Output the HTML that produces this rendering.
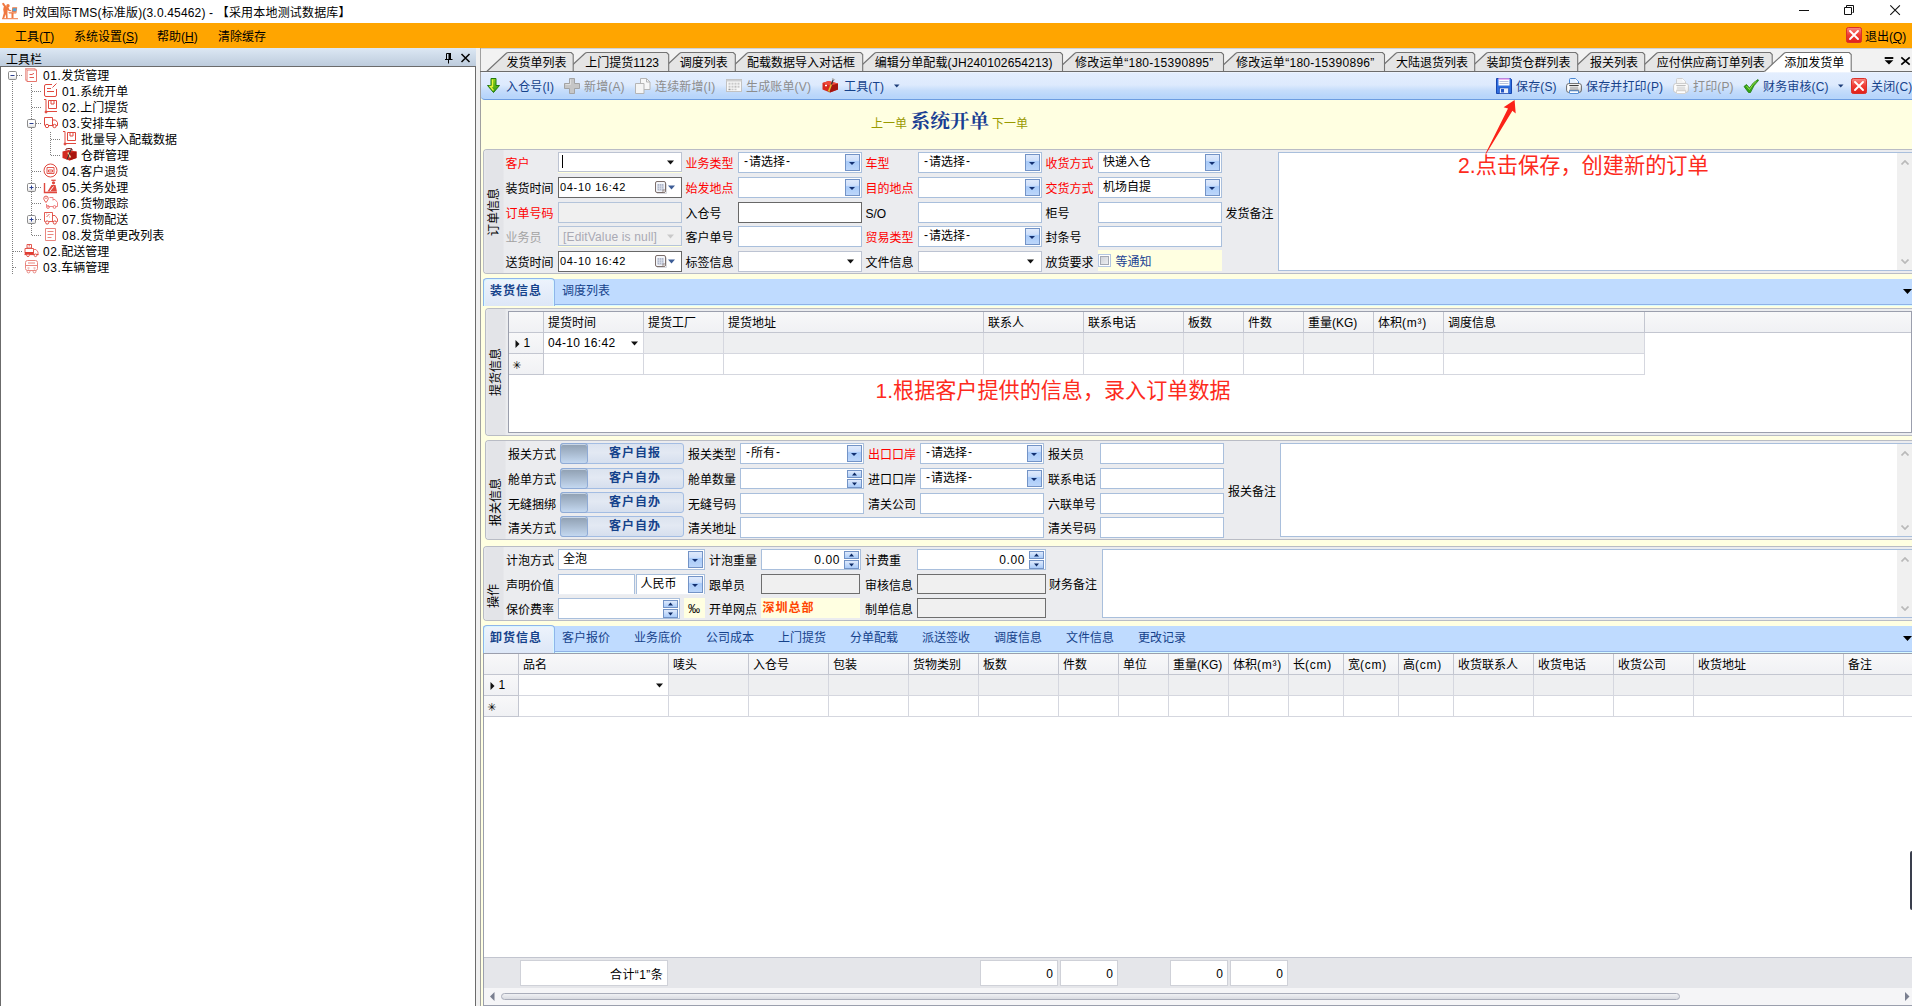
<!DOCTYPE html><html lang="zh-CN"><head><meta charset="utf-8"><title>TMS</title><style>
html,body{margin:0;padding:0}
body{width:1912px;height:1006px;position:relative;overflow:hidden;background:#fff;font:12px/16px "Liberation Sans","Noto Sans CJK SC",sans-serif;color:#000}
div,span,svg{position:absolute;box-sizing:border-box}
.t{white-space:nowrap;line-height:16px;height:16px;font-size:12px}
.r{color:#f00}
.b{font-weight:bold}
.inp{background:#fff;border:1px solid #a9bfdc}
.inpd{background:#fff;border:1px solid #686868}
.dis{background:#f0f0f0;border:1px solid #b4c4da}
.disd{background:#f0f0f0;border:1px solid #6e6e6e}
.ddb{border:1px solid #7393c6;background:linear-gradient(#dfeafc,#cfe0fb 36%,#a9cbf9 44%,#bcd6fa)}
.ddb:after{content:"";position:absolute;left:50%;top:50%;margin:-1px 0 0 -3.500px;border:3px solid transparent;border-top:3px solid #123072;border-bottom:0}
.grp{background:#ebecef;border:1px solid #b9bcc5;border-radius:4px}
.cap{background:linear-gradient(90deg,#e8e9ed,#e3e4e8 12%,#e3e4e8 92%,#e8e9ec);border-radius:3px 0 0 3px}
.vt{transform:rotate(-90deg);transform-origin:center center;white-space:nowrap;font-size:12px;line-height:16px;height:16px;text-align:center}
.hd{background:linear-gradient(#f8f8f9,#f0f1f4);border-right:1px solid #c3c6d0;border-bottom:1px solid #c3c6d0;white-space:nowrap;overflow:hidden;padding-left:4px;line-height:22px;font-size:12px}
.c{border-right:1px solid #d5d7df;border-bottom:1px solid #d5d7df;background:#fff}
.cs{border-right:1px solid #d5d7df;border-bottom:1px solid #d5d7df;background:#eeeff1}
.tb{color:#15428b}
.tg{color:#8d8d8d}
.l{font-style:normal;letter-spacing:.75px;position:static}
.h{font-style:normal;position:relative;top:-1px;padding:0 1px;left:0}
.n{font-style:normal;letter-spacing:.55px;position:static}
</style></head><body>
<div style="left:0px;top:0px;width:1912px;height:23px;background:#fff"></div>
<svg style="left:0;top:0" width="20" height="22" viewBox="0 0 20 22">
<g fill="#f07840"><circle cx="8" cy="5.800" r="1.700"/><path d="M2.200 3.300q1-.9 1.900 0l1 1.600 1.500 1.500 1.800.9 1 2.400 1.800.6v.9l-2.500-.2-1-1.200-.3 3.200.3 5.400H6.200l-.6-4.200-1.500 4.200H2.300l1.500-5.400-.6-3.400.7-3.300L2.600 5z"/>
<path d="M8.300 12.200h8.600l-.8 1.300h-2.600v4.600h-2V13.500H9.100z"/><path d="M2 18.200h16v1H2z"/><path d="M12.300 7.200h4.900l-.6 4.700h-4.900z"/></g>
<path d="M12.900 8.200h3.700l-.4 3h-3.700z" fill="#4ea6dc"/></svg>
<span class="t" style="left:23px;top:4.5px;letter-spacing:.17px">时效国际TMS(标准版)(3.0.45462) - 【采用本地测试数据库】</span>
<svg style="left:1790px;top:0" width="122" height="23" viewBox="0 0 122 23" fill="none" stroke="#111" stroke-width="1"><path d="M9 10.5h10"/><path d="M54.500 7.500h7v7h-7z"/><path d="M56.500 7.500v-2h7v7h-1"/><path d="M100.3 5.3l9.6 9.6M109.9 5.3l-9.6 9.6" stroke-width="1.1"/></svg>
<div style="left:0px;top:23px;width:1912px;height:25px;background:#ffa500"></div>
<span class="t" style="left:15px;top:29px;">工具(<u>T</u>)</span>
<span class="t" style="left:74px;top:29px;">系统设置(<u>S</u>)</span>
<span class="t" style="left:157px;top:29px;">帮助(<u>H</u>)</span>
<span class="t" style="left:218px;top:29px;">清除缓存</span>
<svg style="left:1846px;top:27px" width="16" height="16" viewBox="0 0 16 16"><defs><linearGradient id="rx1" x1="0" y1="0" x2="0" y2="1"><stop offset="0" stop-color="#f98a84"/><stop offset=".5" stop-color="#ef3b33"/><stop offset="1" stop-color="#e0201a"/></linearGradient></defs><rect x=".5" y=".5" width="15" height="15" rx="1.800" fill="url(#rx1)" stroke="#d9312a"/><path d="M4 4l8 8M12 4l-8 8" stroke="#fff" stroke-width="1.900" stroke-linecap="round"/></svg>
<span class="t" style="left:1865px;top:29px;">退出(<u>Q</u>)</span>
<div style="left:0px;top:48px;width:476px;height:19px;background:linear-gradient(#dde8f4,#cfdcea 40%,#bccbdc)"></div>
<span class="t" style="left:6px;top:52px;">工具栏</span>
<svg style="left:443px;top:51px" width="30" height="14" viewBox="0 0 30 14" fill="none" stroke="#000"><path d="M3.500 8V2.500h4V8" stroke-width="1"/><path d="M5.500 2h2.500v6.500h-2.500z" fill="#000" stroke="none"/><path d="M2 8.500h7.500M5.500 9v3.500" stroke-width="1"/><path d="M18.5 3l8 8M26.5 3l-8 8" stroke-width="1.5"/></svg>
<div style="left:0px;top:66px;width:476px;height:940px;background:#fff;border:1px solid #6b6b6b;border-bottom:0"></div>
<div style="left:476px;top:48px;width:4px;height:958px;background:#f0f0f0"></div>
<div style="left:12px;top:80px;width:1px;height:194px;background:repeating-linear-gradient(0deg,#7f7f7f 0 1px,transparent 1px 2px)"></div>
<div style="left:31px;top:83px;width:1px;height:152px;background:repeating-linear-gradient(0deg,#7f7f7f 0 1px,transparent 1px 2px)"></div>
<div style="left:50px;top:132px;width:1px;height:23px;background:repeating-linear-gradient(0deg,#7f7f7f 0 1px,transparent 1px 2px)"></div>
<div style="left:17px;top:75px;width:6px;height:1px;background:repeating-linear-gradient(90deg,#7f7f7f 0 1px,transparent 1px 2px)"></div>
<svg style="left:8px;top:71px" width="9" height="9" viewBox="0 0 9 9"><defs><linearGradient id="eg8_75" x1="0" y1="0" x2="0" y2="1"><stop offset=".5" stop-color="#fff"/><stop offset="1" stop-color="#dcdcdc"/></linearGradient></defs><rect x=".5" y=".5" width="8" height="8" rx="1.200" fill="url(#eg8_75)" stroke="#8c8c8c"/><path d="M2.500 4.500h4" stroke="#2b3f8f"/></svg>
<svg style="left:24px;top:67px" width="15" height="15" viewBox="0 0 15 15" fill="none" stroke="#e0483e" stroke-width="1"><path d="M1.500 1.500h9.500v11.500h-9.500z" stroke="#eb9d95" stroke-width=".9"/><path d="M1.500 1.500l1.500 1.500M11 1.500l1.500 1.500M1.500 13l1.500 1.500" stroke="#eb9d95" stroke-width=".9"/><path d="M3 3h9.500v11.500h-9.500z" fill="#fff" stroke="#e4675c" stroke-width=".9"/><path d="M5.500 7.500h2.500l2-1.200M5.500 10.500h4.500" stroke-width=".9"/></svg>
<span class="t" style="left:43px;top:68px;"><i class="n">01.</i>发货管理</span>
<div style="left:32px;top:91px;width:10px;height:1px;background:repeating-linear-gradient(90deg,#7f7f7f 0 1px,transparent 1px 2px)"></div>
<svg style="left:43px;top:83px" width="15" height="15" viewBox="0 0 15 15" fill="none" stroke="#e0483e" stroke-width="1"><path d="M9 1.5h-6a1.5 1.5 0 0 0-1.500 1.500v9a1.500 1.500 0 0 0 1.500 1.500h9a1.500 1.500 0 0 0 1.500-1.500v-6"/><path d="M4 5.500h4M4 8.500h7M9.500 4.500l4-4"/></svg>
<span class="t" style="left:62px;top:84px;"><i class="n">01.</i>系统开单</span>
<div style="left:32px;top:107px;width:10px;height:1px;background:repeating-linear-gradient(90deg,#7f7f7f 0 1px,transparent 1px 2px)"></div>
<svg style="left:43px;top:99px" width="15" height="15" viewBox="0 0 15 15" fill="none" stroke="#e0483e" stroke-width="1"><path d="M1 .5h2v12h11"/><path d="M5.500 1.500h8v8h-8z"/><path d="M8 1.500v3.500h3v-3.500"/><circle cx="3" cy="13" r="1" fill="#e0483e"/></svg>
<span class="t" style="left:62px;top:100px;"><i class="n">02.</i>上门提货</span>
<div style="left:36px;top:123px;width:6px;height:1px;background:repeating-linear-gradient(90deg,#7f7f7f 0 1px,transparent 1px 2px)"></div>
<svg style="left:27px;top:119px" width="9" height="9" viewBox="0 0 9 9"><defs><linearGradient id="eg27_123" x1="0" y1="0" x2="0" y2="1"><stop offset=".5" stop-color="#fff"/><stop offset="1" stop-color="#dcdcdc"/></linearGradient></defs><rect x=".5" y=".5" width="8" height="8" rx="1.200" fill="url(#eg27_123)" stroke="#8c8c8c"/><path d="M2.500 4.500h4" stroke="#2b3f8f"/></svg>
<svg style="left:43px;top:115px" width="15" height="15" viewBox="0 0 15 15" fill="none" stroke="#e0483e" stroke-width="1"><path d="M1.500 10.500v-8h8v8M9.500 5h3l2 2.500v3h-1.500M5.500 10.500h5"/><circle cx="4" cy="11" r="1.700"/><circle cx="11.500" cy="11" r="1.700"/></svg>
<span class="t" style="left:62px;top:116px;"><i class="n">03.</i>安排车辆</span>
<div style="left:51px;top:139px;width:10px;height:1px;background:repeating-linear-gradient(90deg,#7f7f7f 0 1px,transparent 1px 2px)"></div>
<svg style="left:62px;top:131px" width="15" height="15" viewBox="0 0 15 15" fill="none" stroke="#e0483e" stroke-width="1"><path d="M1 .5h2v12h11"/><path d="M5.500 1.500h8v8h-8z"/><path d="M8 1.500v3.500h3v-3.500"/><circle cx="3" cy="13" r="1" fill="#e0483e"/></svg>
<span class="t" style="left:81px;top:132px;">批量导入配载数据</span>
<div style="left:51px;top:155px;width:10px;height:1px;background:repeating-linear-gradient(90deg,#7f7f7f 0 1px,transparent 1px 2px)"></div>
<svg style="left:62px;top:147px" width="15" height="15" viewBox="0 0 15 15"><path d="M.5 4.500l6-1.500 8 1.500v6.500l-7 2.500-7-2.500z" fill="#d42a20"/><path d="M7.500 6l7-1.500v6.500l-7 2.500z" fill="#a8140e"/><path d="M4 3.500v-1.500l3-.5 3 .5v1.500" fill="none" stroke="#7a0f0a"/><path d="M6 5.500l2.500 5" stroke="#f3d9a0" stroke-width="1.600"/><path d="M9.500 1.500l-4.500 11" stroke="#333" stroke-width="1"/></svg>
<span class="t" style="left:81px;top:148px;">仓群管理</span>
<div style="left:32px;top:171px;width:10px;height:1px;background:repeating-linear-gradient(90deg,#7f7f7f 0 1px,transparent 1px 2px)"></div>
<svg style="left:43px;top:163px" width="15" height="15" viewBox="0 0 15 15" fill="none" stroke="#e0483e" stroke-width="1"><circle cx="7.500" cy="7.500" r="6.500"/><path d="M4 4.500h7v6h-7zM5.500 7h4v2h-4z" stroke-width=".9"/></svg>
<span class="t" style="left:62px;top:164px;"><i class="n">04.</i>客户退货</span>
<div style="left:36px;top:187px;width:6px;height:1px;background:repeating-linear-gradient(90deg,#7f7f7f 0 1px,transparent 1px 2px)"></div>
<svg style="left:27px;top:183px" width="9" height="9" viewBox="0 0 9 9"><defs><linearGradient id="eg27_187" x1="0" y1="0" x2="0" y2="1"><stop offset=".5" stop-color="#fff"/><stop offset="1" stop-color="#dcdcdc"/></linearGradient></defs><rect x=".5" y=".5" width="8" height="8" rx="1.200" fill="url(#eg27_187)" stroke="#8c8c8c"/><path d="M2.500 4.500h4" stroke="#2b3f8f"/><path d="M4.500 2.500v4" stroke="#2b3f8f"/></svg>
<svg style="left:43px;top:179px" width="15" height="15" viewBox="0 0 15 15" fill="none" stroke="#e0483e" stroke-width="1"><path d="M1.500 4v9.500h12.500" stroke-width="1.400"/><path d="M8.300 1.300h4.400" stroke-width="1.300"/><circle cx="10.500" cy="3.800" r="1.600" fill="#e0483e" stroke="none"/><path d="M4.500 12.500l4-6.500h4l1.500 6.500z" fill="#e0483e" stroke="none"/><path d="M7 12l3.500-4.500" stroke="#fff" stroke-width="1"/></svg>
<span class="t" style="left:62px;top:180px;"><i class="n">05.</i>关务处理</span>
<div style="left:32px;top:203px;width:10px;height:1px;background:repeating-linear-gradient(90deg,#7f7f7f 0 1px,transparent 1px 2px)"></div>
<svg style="left:43px;top:195px" width="15" height="15" viewBox="0 0 15 15" fill="none" stroke="#e0483e" stroke-width="1"><path d="M3 7.500C1 5 .8 4.300 .8 3.300a2.200 2.200 0 0 1 4.400 0c0 1-.2 1.700-2.200 4.200z" stroke-width=".9"/><circle cx="3" cy="3.200" r=".7" fill="#e0483e" stroke="none"/><path d="M6.500 2.500h3.500v3M10 4.500h2l2.500 3v4h-1.500M4.500 11.500h5.500M3.500 9v2.500" stroke="#e77" stroke-width=".9"/><circle cx="5" cy="12" r="1.400" stroke="#e77"/><circle cx="11.500" cy="12" r="1.400" stroke="#e77"/></svg>
<span class="t" style="left:62px;top:196px;"><i class="n">06.</i>货物跟踪</span>
<div style="left:36px;top:219px;width:6px;height:1px;background:repeating-linear-gradient(90deg,#7f7f7f 0 1px,transparent 1px 2px)"></div>
<svg style="left:27px;top:215px" width="9" height="9" viewBox="0 0 9 9"><defs><linearGradient id="eg27_219" x1="0" y1="0" x2="0" y2="1"><stop offset=".5" stop-color="#fff"/><stop offset="1" stop-color="#dcdcdc"/></linearGradient></defs><rect x=".5" y=".5" width="8" height="8" rx="1.200" fill="url(#eg27_219)" stroke="#8c8c8c"/><path d="M2.500 4.500h4" stroke="#2b3f8f"/><path d="M4.500 2.500v4" stroke="#2b3f8f"/></svg>
<svg style="left:43px;top:211px" width="15" height="15" viewBox="0 0 15 15" fill="none" stroke="#e0483e" stroke-width="1"><path d="M2.500 10.500h-1v-9h8v9M9.500 4.500h2.500l2.500 3.500v2.500h-1M6 10.500h4.500" stroke-width=".9"/><path d="M3.500 6l3-3M3.500 3h.6M6 6h.6" stroke-width=".9"/><circle cx="4.200" cy="11.500" r="1.600"/><circle cx="11.800" cy="11.500" r="1.600"/></svg>
<span class="t" style="left:62px;top:212px;"><i class="n">07.</i>货物配送</span>
<div style="left:32px;top:235px;width:10px;height:1px;background:repeating-linear-gradient(90deg,#7f7f7f 0 1px,transparent 1px 2px)"></div>
<svg style="left:43px;top:227px" width="15" height="15" viewBox="0 0 15 15" fill="none" stroke="#e0483e" stroke-width="1"><path d="M2.500 1.500h10v12h-10z" stroke="#e9867f"/><path d="M4.500 4.500h6M4.500 7.500h6M4.500 10.500h4" stroke="#e9867f"/></svg>
<span class="t" style="left:62px;top:228px;"><i class="n">08.</i>发货单更改列表</span>
<div style="left:13px;top:251px;width:10px;height:1px;background:repeating-linear-gradient(90deg,#7f7f7f 0 1px,transparent 1px 2px)"></div>
<svg style="left:24px;top:243px" width="15" height="15" viewBox="0 0 15 15" fill="none" stroke="#e0483e" stroke-width="1"><path d="M3 1.500h4.500v3.500h-4.500zM5.200 1.500v2" stroke-width=".9"/><path d="M1 5.500h8.500v5h-8.500z" stroke="#e2574c"/><path d="M1 9h8.500v2.500h-8.500z" fill="#e03a30" stroke="none"/><path d="M9.500 6.500h2.500l2 2.500v2.500h-4.500" stroke="#e77"/><path d="M.5 11.500h14" stroke-width="1.200"/><circle cx="4" cy="12.300" r="1.300" fill="#fff" stroke-width=".9"/><circle cx="11.500" cy="12.300" r="1.300" fill="#fff" stroke-width=".9"/></svg>
<span class="t" style="left:43px;top:244px;"><i class="n">02.</i>配送管理</span>
<div style="left:13px;top:267px;width:4px;height:1px;background:repeating-linear-gradient(90deg,#7f7f7f 0 1px,transparent 1px 2px)"></div>
<svg style="left:24px;top:259px" width="15" height="15" viewBox="0 0 15 15" fill="none" stroke="#e0483e" stroke-width="1"><rect x="1.500" y="1.500" width="12" height="10" rx="2" stroke="#e9867f"/><path d="M1.500 6.500h12M4 4h7" stroke="#e9867f"/><circle cx="4.500" cy="12.500" r="1.400" stroke="#e9867f"/><circle cx="10.500" cy="12.500" r="1.400" stroke="#e9867f"/><path d="M3.500 9h2M9.500 9h2" stroke="#e9867f"/></svg>
<span class="t" style="left:43px;top:260px;"><i class="n">03.</i>车辆管理</span>
<div style="left:480px;top:48px;width:1432px;height:958px;background:#ffffe1;border-left:1px solid #a0a0a0"></div>
<div style="left:480px;top:48px;width:1432px;height:24px;background:#f2f2f2;border-left:1px solid #a0a0a0"></div>
<svg style="left:480px;top:48px" width="1432" height="24" viewBox="480 48 1432 24"><path d="M481 48.500h1431" stroke="#cdd1d9"/><path d="M1637.0 71.500L1656.3 53.500Q1657.3 52.500 1658.8 52.500H1770.2L1772.2 54.500V71.500" fill="#e5e5e5" stroke="#747474" stroke-width="1.100"/><path d="M1570.3 71.500L1589.6 53.500Q1590.6 52.500 1592.1 52.500H1642.7L1644.7 54.500V71.500" fill="#e5e5e5" stroke="#747474" stroke-width="1.100"/><path d="M1466.7 71.500L1486.0 53.500Q1487.0 52.500 1488.5 52.500H1575.7L1577.7 54.500V71.500" fill="#e5e5e5" stroke="#747474" stroke-width="1.100"/><path d="M1376.3 71.500L1395.6 53.500Q1396.6 52.500 1398.1 52.500H1472.7L1474.7 54.500V71.500" fill="#e5e5e5" stroke="#747474" stroke-width="1.100"/><path d="M1216.3 71.500L1235.6 53.500Q1236.6 52.500 1238.1 52.500H1382.5L1384.5 54.500V71.500" fill="#e5e5e5" stroke="#747474" stroke-width="1.100"/><path d="M1055.3 71.500L1074.6 53.500Q1075.6 52.500 1077.1 52.500H1221.5L1223.5 54.500V71.500" fill="#e5e5e5" stroke="#747474" stroke-width="1.100"/><path d="M855.0 71.500L874.3 53.500Q875.3 52.500 876.8 52.500H1060.5L1062.5 54.500V71.500" fill="#e5e5e5" stroke="#747474" stroke-width="1.100"/><path d="M727.3 71.500L746.6 53.500Q747.6 52.500 749.1 52.500H860.7L862.7 54.500V71.500" fill="#e5e5e5" stroke="#747474" stroke-width="1.100"/><path d="M660.1 71.500L679.4 53.500Q680.4 52.500 681.9 52.500H733.3L735.3 54.500V71.500" fill="#e5e5e5" stroke="#747474" stroke-width="1.100"/><path d="M565.5 71.500L584.8 53.500Q585.8 52.500 587.3 52.500H666.7L668.7 54.500V71.500" fill="#e5e5e5" stroke="#747474" stroke-width="1.100"/><path d="M486.7 71.500L506.0 53.500Q507.0 52.500 508.5 52.500H571.2L573.2 54.500V71.500" fill="#e5e5e5" stroke="#747474" stroke-width="1.100"/><path d="M480 71.500h1432" stroke="#6c6c6c"/><path d="M1764.5 71.500L1783.8 53.500Q1784.8 52.500 1786.3 52.500H1849.2L1851.2 54.500V71.500V72.500H1763.5z" fill="#fff" stroke="none"/><path d="M1764.5 71.500L1783.8 53.500Q1784.8 52.500 1786.3 52.500H1849.2L1851.2 54.500V71.500" fill="none" stroke="#747474" stroke-width="1.100"/><path d="M1884.700 60.300h8.600l-4.300 4.200z" fill="#000"/><path d="M1884.700 58h8.600" stroke="#000" stroke-width="1.900"/><path d="M1901.300 57.300l8.400 7.400M1909.700 57.300l-8.400 7.400" stroke="#000" stroke-width="1.700"/></svg>
<span class="t" style="left:506.4px;top:55px;">发货单列表</span>
<span class="t" style="left:585.2px;top:55px;">上门提货1123</span>
<span class="t" style="left:679.8px;top:55px;">调度列表</span>
<span class="t" style="left:747px;top:55px;">配载数据导入对话框</span>
<span class="t" style="left:874.7px;top:55px;letter-spacing:.15px">编辑分单配载(JH240102654213)</span>
<span class="t" style="left:1075px;top:55px;letter-spacing:.29px">修改运单“180-15390895”</span>
<span class="t" style="left:1236px;top:55px;letter-spacing:.29px">修改运单“180-15390896”</span>
<span class="t" style="left:1396px;top:55px;">大陆退货列表</span>
<span class="t" style="left:1486.4px;top:55px;">装卸货仓群列表</span>
<span class="t" style="left:1590px;top:55px;">报关列表</span>
<span class="t" style="left:1656.7px;top:55px;">应付供应商订单列表</span>
<span class="t" style="left:1784.2px;top:55px;">添加发货单</span>
<div style="left:481px;top:72px;width:1431px;height:28px;background:linear-gradient(#f2f7fe 0,#e3eefe 5%,#ddeafd 48%,#c6ddfb 68%,#b9d6fb 88%,#b6d5fb);border-bottom:1px solid #6d9de1;border-radius:0 0 0 4px"></div>
<svg style="left:486px;top:78px" width="16" height="16" viewBox="0 0 16 16"><defs><linearGradient id="ga" x1="0" y1="0" x2="0" y2="1"><stop offset="0" stop-color="#8fd31a"/><stop offset="1" stop-color="#2f9a12"/></linearGradient></defs><path d="M5 .5h5v7h3.500L7.500 14.500 1.500 7.500H5z" fill="url(#ga)" stroke="#1f7a10"/><path d="M6.500 1.500v7H4.200L7.500 12.500" fill="none" stroke="#e8f23a" stroke-width="1.300"/></svg>
<svg style="left:564px;top:78px" width="16" height="16" viewBox="0 0 16 16"><path d="M5.500 .5h5v5h5v5h-5v5h-5v-5h-5v-5h5z" fill="#c6c6c6" stroke="#a3a3a3"/><path d="M6.500 1.500v5h-5" fill="none" stroke="#dedede"/></svg>
<svg style="left:635px;top:78px" width="16" height="16" viewBox="0 0 16 16"><path d="M5.500 .5h6l3.500 3.500v7.500h-9.500z" fill="#f7f7f7" stroke="#b5b5b5"/><path d="M11.500 .5v3.500h3.500" fill="none" stroke="#b5b5b5"/><path d="M.5 5.500h8.500v10h-8.500z" fill="#f4f4f4" stroke="#b5b5b5"/></svg>
<svg style="left:726px;top:79px" width="16" height="16" viewBox="0 0 16 16"><rect x=".5" y=".5" width="15" height="12" fill="#f7f7f7" stroke="#c2c2c2"/><path d="M.5 1.700h15" stroke="#cfcfcf" stroke-width="1.600"/><g fill="#c9c9c9" transform="translate(0,-.8)"><rect x="2.500" y="4.500" width="2" height="2"/><rect x="5.500" y="4.500" width="2" height="2"/><rect x="8.500" y="4.500" width="2" height="2"/><rect x="11.500" y="4.500" width="2" height="2"/><rect x="2.500" y="7.500" width="2" height="2"/><rect x="5.500" y="7.500" width="2" height="2"/><rect x="8.500" y="7.500" width="2" height="2" fill="#bdbdbd"/><rect x="11.500" y="7.500" width="2" height="2"/><rect x="2.500" y="10.500" width="2" height="1.500" fill="#9a9a9a"/><rect x="5.500" y="10.500" width="2" height="1.500"/><rect x="8.500" y="10.500" width="2" height="1.500"/></g></svg>
<svg style="left:822px;top:78px" width="17" height="16" viewBox="0 0 17 16"><path d="M.5 5l6-2 9.500 2.500v6l-8 3-7.500-3z" fill="#d8281e"/><path d="M8 7.500l8-2v6l-8 3z" fill="#a51610"/><path d="M.5 5l7.500 2.500 8-2-9.500-2.500z" fill="#ee4a3c"/><path d="M4 6.500v2M3 7.500h2" stroke="#fff" stroke-width="1"/><path d="M11.500 1L6.500 14" stroke="#333" stroke-width="1.200"/><path d="M9.300 6.500L6.600 13.600" stroke="#f2b632" stroke-width="1.600"/><path d="M10 .5l3 1.500" stroke="#b9b9b9" stroke-width="1.300"/></svg>
<svg style="left:1496px;top:78px" width="16" height="16" viewBox="0 0 16 16"><path d="M.5 .5h14l1 1v14h-15z" fill="#2f6fe0" stroke="#1846b0"/><rect x="2.500" y=".5" width="11" height="7" fill="#fff"/><path d="M2.500 1h11" stroke="#e46be4" stroke-width="1"/><path d="M3.500 3.500h9M3.500 5.500h9" stroke="#b9c3dc"/><rect x="3.500" y="10" width="9" height="5.500" fill="#e9eefb" stroke="#1846b0" stroke-width=".6"/><rect x="5" y="11" width="3" height="3.500" fill="#2555c4"/></svg>
<svg style="left:1566px;top:78px" width="16" height="16" viewBox="0 0 16 16"><defs><linearGradient id="pg1566" x1="0" y1="0" x2="1" y2="1"><stop offset="0" stop-color="#ffffff"/><stop offset=".55" stop-color="#ffffff"/><stop offset="1" stop-color="#bdbdbd"/></linearGradient></defs><path d="M3.500 7.500V1.500Q3.500 .5 4.500 .5H9.500L12.500 3.500V7.500z" fill="#e6f0fd" stroke="#4a86d0"/><path d="M9.500 .8V3.500H12.200" fill="#fff" stroke="none"/><rect x=".6" y="5.600" width="14.800" height="8.800" rx="2.200" fill="url(#pg1566)" stroke="#5a5a5a" stroke-width=".9"/><path d="M3.300 7.500h9.400" stroke="#3f3f3f" stroke-width="1"/><rect x="3.800" y="8.500" width="8.400" height="3.200" fill="#c2c2c2"/><path d="M3.300 12.300h9.400" stroke="#3f3f3f" stroke-width="1"/><path d="M3.500 12.800V15Q3.500 15.500 4 15.500H12Q12.500 15.500 12.500 15V12.800z" fill="#fff" stroke="#4a86d0" stroke-width=".9"/></svg>
<svg style="left:1673px;top:78px" width="16" height="16" viewBox="0 0 16 16"><defs><linearGradient id="pg1673" x1="0" y1="0" x2="1" y2="1"><stop offset="0" stop-color="#fdfdfd"/><stop offset=".55" stop-color="#fdfdfd"/><stop offset="1" stop-color="#e6e6e6"/></linearGradient></defs><path d="M3.500 7.500V1.500Q3.500 .5 4.500 .5H9.500L12.500 3.500V7.500z" fill="#f3f3f3" stroke="#cfcfcf"/><path d="M9.500 .8V3.500H12.200" fill="#fff" stroke="none"/><rect x=".6" y="5.600" width="14.800" height="8.800" rx="2.200" fill="url(#pg1673)" stroke="#c4c4c4" stroke-width=".9"/><path d="M3.300 7.500h9.400" stroke="#c0c0c0" stroke-width="1"/><rect x="3.800" y="8.500" width="8.400" height="3.200" fill="#e0e0e0"/><path d="M3.300 12.300h9.400" stroke="#c0c0c0" stroke-width="1"/><path d="M3.500 12.800V15Q3.500 15.500 4 15.500H12Q12.500 15.500 12.500 15V12.800z" fill="#fff" stroke="#d6d2cc" stroke-width=".9"/></svg>
<svg style="left:1743px;top:78px" width="16" height="16" viewBox="0 0 16 16"><path d="M1 8.500l2.500-2 3 3.500Q10 4 15 1.500l.5 1Q10.500 7 7.500 14.500h-2z" fill="#35a616" stroke="#1f7a10" stroke-width=".8"/><path d="M3.500 8l3 3.500Q9.500 6 13.500 3" fill="none" stroke="#9be04a" stroke-width="1"/></svg>
<svg style="left:1851px;top:78px" width="16" height="16" viewBox="0 0 16 16"><defs><linearGradient id="rx2" x1="0" y1="0" x2="0" y2="1"><stop offset="0" stop-color="#f98a84"/><stop offset=".5" stop-color="#ef3b33"/><stop offset="1" stop-color="#e0201a"/></linearGradient></defs><rect x=".5" y=".5" width="15" height="15" rx="1.800" fill="url(#rx2)" stroke="#d9312a"/><path d="M4 4l8 8M12 4l-8 8" stroke="#fff" stroke-width="1.900" stroke-linecap="round"/></svg>
<span class="t tb" style="left:506px;top:79px;letter-spacing:.15px">入仓号(I)</span>
<span class="t tg" style="left:584px;top:79px;letter-spacing:.15px">新增(A)</span>
<span class="t tg" style="left:655px;top:79px;letter-spacing:.15px">连续新增(I)</span>
<span class="t tg" style="left:746px;top:79px;letter-spacing:.15px">生成账单(V)</span>
<span class="t tb" style="left:844px;top:79px;letter-spacing:.15px">工具(T)</span>
<span class="t tb" style="left:1516px;top:79px;letter-spacing:.15px">保存(S)</span>
<span class="t tb" style="left:1586px;top:79px;letter-spacing:.15px">保存并打印(P)</span>
<span class="t tg" style="left:1693px;top:79px;letter-spacing:.15px">打印(P)</span>
<span class="t tb" style="left:1763px;top:79px;letter-spacing:.15px">财务审核(C)</span>
<span class="t tb" style="left:1871px;top:79px;letter-spacing:.15px">关闭(C)</span>
<svg style="left:894px;top:84px" width="6" height="4" viewBox="0 0 6 4"><path d="M0 .5h5.500L2.750 3.500z" fill="#1c3c78"/></svg>
<svg style="left:1838px;top:84px" width="6" height="4" viewBox="0 0 6 4"><path d="M0 .5h5.500L2.750 3.500z" fill="#1c3c78"/></svg>
<span class="t" style="left:871px;top:116px;color:#9a9a00">上一单</span>
<span class="t" style="left:992px;top:116px;color:#9a9a00">下一单</span>
<span class="t" style="left:910.500px;top:108.500px;height:24px;line-height:24px;font:bold 19.700px/24px 'Liberation Serif','Noto Serif CJK SC',serif;color:#1b3f93">系统开单</span>
<div class="grp" style="left:483px;top:149px;width:1440px;height:125px;border-right:0;border-radius:4px 0 0 4px"></div>
<div class="cap" style="left:484px;top:150px;width:20px;height:123px;"></div>
<div class="vt" style="left:454.0px;top:203.5px;width:80px">订单信息</div>
<span class="t" style="left:505.5px;top:156px;color:#f00">客户</span>
<span class="t" style="left:505.5px;top:181px;">装货时间</span>
<span class="t" style="left:505.5px;top:206px;color:#f00">订单号码</span>
<span class="t" style="left:505.5px;top:230px;color:#a3a3a3">业务员</span>
<span class="t" style="left:505.5px;top:255px;">送货时间</span>
<span class="t" style="left:685.5px;top:156px;color:#f00">业务类型</span>
<span class="t" style="left:685.5px;top:181px;color:#f00">始发地点</span>
<span class="t" style="left:685.5px;top:206px;">入仓号</span>
<span class="t" style="left:685.5px;top:230px;">客户单号</span>
<span class="t" style="left:685.5px;top:255px;">标签信息</span>
<span class="t" style="left:865.5px;top:156px;color:#f00">车型</span>
<span class="t" style="left:865.5px;top:181px;color:#f00">目的地点</span>
<span class="t" style="left:865.5px;top:206px;">S/O</span>
<span class="t" style="left:865.5px;top:230px;color:#f00">贸易类型</span>
<span class="t" style="left:865.5px;top:255px;">文件信息</span>
<span class="t" style="left:1045.5px;top:156px;color:#f00">收货方式</span>
<span class="t" style="left:1045.5px;top:181px;color:#f00">交货方式</span>
<span class="t" style="left:1045.5px;top:206px;">柜号</span>
<span class="t" style="left:1045.5px;top:230px;">封条号</span>
<span class="t" style="left:1045.5px;top:255px;">放货要求</span>
<div class="inp" style="left:558px;top:152px;width:124px;height:20px;border-color:#bcc3d2"></div>
<svg style="left:667px;top:160px" width="8" height="5" viewBox="0 0 8 5"><path d="M0 .5h7L3.500 4.500z" fill="#111"/></svg>
<div style="left:558px;top:172px;width:124px;height:1px;background:#ffffd9"></div>
<div style="left:562px;top:155px;width:1px;height:13px;background:#000"></div>
<div class="inpd" style="left:558px;top:177px;width:124px;height:21px;"></div>
<span class="t" style="left:560px;top:178.7px;letter-spacing:.66px;font-size:11px">04-10 16:42</span>
<svg style="left:655px;top:181px" width="22" height="13" viewBox="0 0 22 13"><path d="M2 12.500h9.500v-10" fill="none" stroke="#d9dbe0"/><rect x=".5" y=".5" width="10" height="11" rx="1.500" fill="#f4f6fa" stroke="#7d6f6c"/><rect x="2.500" y="3" width="6" height="6.500" fill="#aeb6c9"/><path d="M2.500 5.200h6M2.500 7.300h6M4.500 3v6.500M6.500 3v6.500" stroke="#dfe3ec" stroke-width=".7"/><path d="M8 11.500v-2.500h2.500" fill="#fff" stroke="#7d6f6c" stroke-width=".8"/><path d="M13 4.500h7L16.500 8.500z" fill="#3c5c96"/></svg>
<div class="dis" style="left:558px;top:202px;width:124px;height:21px;"></div>
<div class="dis" style="left:558px;top:226px;width:124px;height:20px;"></div>
<svg style="left:667px;top:234px" width="8" height="5" viewBox="0 0 8 5"><path d="M0 .5h7L3.500 4.500z" fill="#c9c9c9"/></svg>
<div style="left:558px;top:246px;width:124px;height:1px;background:#ffffd9"></div>
<span class="t" style="left:563px;top:228.5px;color:#a9a9b4;letter-spacing:.15px">[EditValue is null]</span>
<div class="inpd" style="left:558px;top:251px;width:124px;height:21px;"></div>
<span class="t" style="left:560px;top:252.7px;letter-spacing:.66px;font-size:11px">04-10 16:42</span>
<svg style="left:655px;top:255px" width="22" height="13" viewBox="0 0 22 13"><path d="M2 12.500h9.500v-10" fill="none" stroke="#d9dbe0"/><rect x=".5" y=".5" width="10" height="11" rx="1.500" fill="#f4f6fa" stroke="#7d6f6c"/><rect x="2.500" y="3" width="6" height="6.500" fill="#aeb6c9"/><path d="M2.500 5.200h6M2.500 7.300h6M4.500 3v6.500M6.500 3v6.500" stroke="#dfe3ec" stroke-width=".7"/><path d="M8 11.500v-2.500h2.500" fill="#fff" stroke="#7d6f6c" stroke-width=".8"/><path d="M13 4.500h7L16.500 8.500z" fill="#3c5c96"/></svg>
<div class="inp" style="left:738px;top:152px;width:124px;height:21px;"></div>
<div class="ddb" style="left:845px;top:154px;width:15px;height:17px;"></div>
<span class="t" style="left:743px;top:153.5px;"><i class="h">-</i>请选择<i class="h">-</i></span>
<div class="inp" style="left:738px;top:177px;width:124px;height:21px;"></div>
<div class="ddb" style="left:845px;top:179px;width:15px;height:17px;"></div>
<div class="inpd" style="left:738px;top:202px;width:124px;height:21px;"></div>
<div class="inp" style="left:738px;top:226px;width:124px;height:21px;"></div>
<div class="inp" style="left:738px;top:251px;width:124px;height:21px;border-color:#bcc3d2"></div>
<svg style="left:847px;top:259px" width="8" height="5" viewBox="0 0 8 5"><path d="M0 .5h7L3.500 4.500z" fill="#111"/></svg>
<div class="inp" style="left:918px;top:152px;width:124px;height:21px;"></div>
<div class="ddb" style="left:1025px;top:154px;width:15px;height:17px;"></div>
<span class="t" style="left:923px;top:153.5px;"><i class="h">-</i>请选择<i class="h">-</i></span>
<div class="inp" style="left:918px;top:177px;width:124px;height:21px;"></div>
<div class="ddb" style="left:1025px;top:179px;width:15px;height:17px;"></div>
<div class="inp" style="left:918px;top:202px;width:124px;height:21px;"></div>
<div class="inp" style="left:918px;top:226px;width:124px;height:21px;"></div>
<div class="ddb" style="left:1025px;top:228px;width:15px;height:17px;"></div>
<span class="t" style="left:923px;top:227.5px;"><i class="h">-</i>请选择<i class="h">-</i></span>
<div class="inp" style="left:918px;top:251px;width:124px;height:21px;border-color:#bcc3d2"></div>
<svg style="left:1027px;top:259px" width="8" height="5" viewBox="0 0 8 5"><path d="M0 .5h7L3.500 4.500z" fill="#111"/></svg>
<div class="inp" style="left:1098px;top:152px;width:124px;height:21px;"></div>
<div class="ddb" style="left:1205px;top:154px;width:15px;height:17px;"></div>
<span class="t" style="left:1103px;top:153.5px;">快递入仓</span>
<div class="inp" style="left:1098px;top:177px;width:124px;height:21px;"></div>
<div class="ddb" style="left:1205px;top:179px;width:15px;height:17px;"></div>
<span class="t" style="left:1103px;top:178.5px;">机场自提</span>
<div class="inp" style="left:1098px;top:202px;width:124px;height:21px;"></div>
<div class="inp" style="left:1098px;top:226px;width:124px;height:21px;"></div>
<div style="left:1098px;top:250px;width:124px;height:21px;background:#ffffe1"></div>
<div style="left:1098px;top:254px;width:13px;height:13px;background:#fff;border:1px solid #b3c6e2"></div>
<div style="left:1100px;top:256px;width:9px;height:9px;background:linear-gradient(135deg,#d0d3d9,#eceef1);border:1px solid #a4a9b3"></div>
<span class="t" style="left:1115.5px;top:254px;color:#1b3f93">等通知</span>
<span class="t" style="left:1225.5px;top:205.5px;">发货备注</span>
<div class="inp" style="left:1278px;top:152px;width:640px;height:119px;"></div>
<div style="left:1897px;top:153px;width:15px;height:117px;background:#f0f0f0"></div>
<svg style="left:1901px;top:160px" width="8" height="5" viewBox="0 0 8 5"><path d="M.5 4.500l3.500-3.500 3.500 3.500" fill="none" stroke="#b9b9b9" stroke-width="1.700"/></svg>
<svg style="left:1901px;top:259px" width="8" height="5" viewBox="0 0 8 5"><path d="M.5 .5l3.500 3.500 3.500-3.500" fill="none" stroke="#b9b9b9" stroke-width="1.700"/></svg>
<span class="t" style="left:1458px;top:150.500px;height:30px;line-height:30px;font-size:21.200px;color:#fd2b1d">2.点击保存，创建新的订单</span>
<svg style="left:1478px;top:98px" width="44" height="62" viewBox="1478 98 44 62"><path d="M1485.400 153.800L1508 108.400 1503.600 107.200 1514.600 99.900 1515.700 113.500 1512.400 110.800 1486.200 153.800z" fill="#fb2318"/></svg>
<div style="left:483px;top:279px;width:1440px;height:25px;background:#bfdbff"></div>
<div style="left:483px;top:304px;width:1440px;height:1px;background:#8fb1e6"></div>
<div style="left:483px;top:305px;width:1440px;height:1px;background:#d9fbff"></div>
<div style="left:483px;top:278px;width:72px;height:28px;background:linear-gradient(#edf3fc,#dde7f7);border:1px solid #8fb5ea;border-bottom:0;border-radius:4px 4px 0 0;box-shadow:inset 1px 1px 0 #d8f6ff,inset -1px 0 0 #d8f6ff"></div>
<span class="t" style="left:490px;top:283px;color:#15428b;font-weight:bold;letter-spacing:1px">装货信息</span>
<span class="t" style="left:562px;top:283px;color:#15428b">调度列表</span>
<svg style="left:1903px;top:289px" width="9" height="5" viewBox="0 0 9 5"><path d="M0 0h9L4.500 5z" fill="#000"/></svg>
<div class="grp" style="left:485px;top:308px;width:1440px;height:128px;border-right:0;border-radius:4px 0 0 4px"></div>
<div class="cap" style="left:486px;top:309px;width:20px;height:126px;"></div>
<div class="vt" style="left:456.0px;top:364.0px;width:80px">提货信息</div>
<div style="left:508px;top:311px;width:1404px;height:122px;background:#fff;border:1px solid #9b9fad"></div>
<div class="hd" style="left:509px;top:312px;width:35px;height:21px;"></div>
<div class="hd" style="left:509px;top:333px;width:35px;height:21px;"></div>
<div class="hd" style="left:509px;top:354px;width:35px;height:21px;"></div>
<div class="hd" style="left:544px;top:312px;width:100px;height:21px;">提货时间</div>
<div class="c" style="left:544px;top:333px;width:100px;height:21px;"></div>
<div class="c" style="left:544px;top:354px;width:100px;height:21px;"></div>
<div class="hd" style="left:644px;top:312px;width:80px;height:21px;">提货工厂</div>
<div class="cs" style="left:644px;top:333px;width:80px;height:21px;"></div>
<div class="c" style="left:644px;top:354px;width:80px;height:21px;"></div>
<div class="hd" style="left:724px;top:312px;width:260px;height:21px;">提货地址</div>
<div class="cs" style="left:724px;top:333px;width:260px;height:21px;"></div>
<div class="c" style="left:724px;top:354px;width:260px;height:21px;"></div>
<div class="hd" style="left:984px;top:312px;width:100px;height:21px;">联系人</div>
<div class="cs" style="left:984px;top:333px;width:100px;height:21px;"></div>
<div class="c" style="left:984px;top:354px;width:100px;height:21px;"></div>
<div class="hd" style="left:1084px;top:312px;width:100px;height:21px;">联系电话</div>
<div class="cs" style="left:1084px;top:333px;width:100px;height:21px;"></div>
<div class="c" style="left:1084px;top:354px;width:100px;height:21px;"></div>
<div class="hd" style="left:1184px;top:312px;width:60px;height:21px;">板数</div>
<div class="cs" style="left:1184px;top:333px;width:60px;height:21px;"></div>
<div class="c" style="left:1184px;top:354px;width:60px;height:21px;"></div>
<div class="hd" style="left:1244px;top:312px;width:60px;height:21px;">件数</div>
<div class="cs" style="left:1244px;top:333px;width:60px;height:21px;"></div>
<div class="c" style="left:1244px;top:354px;width:60px;height:21px;"></div>
<div class="hd" style="left:1304px;top:312px;width:70px;height:21px;">重量(KG)</div>
<div class="cs" style="left:1304px;top:333px;width:70px;height:21px;"></div>
<div class="c" style="left:1304px;top:354px;width:70px;height:21px;"></div>
<div class="hd" style="left:1374px;top:312px;width:70px;height:21px;">体积<i class="l">(m³)</i></div>
<div class="cs" style="left:1374px;top:333px;width:70px;height:21px;"></div>
<div class="c" style="left:1374px;top:354px;width:70px;height:21px;"></div>
<div class="hd" style="left:1444px;top:312px;width:201px;height:21px;">调度信息</div>
<div class="cs" style="left:1444px;top:333px;width:201px;height:21px;"></div>
<div class="c" style="left:1444px;top:354px;width:201px;height:21px;"></div>
<div class="hd" style="left:1645px;top:312px;width:266px;height:21px;border-right:0"></div>
<svg style="left:515px;top:339.5px" width="5" height="8" viewBox="0 0 5 8"><path d="M.5 0v8l4-4z" fill="#111"/></svg>
<span class="t" style="left:523.5px;top:335.3px;">1</span>
<span class="t" style="left:512px;top:358.0px;font-size:11px;font-family:'DejaVu Sans',sans-serif">✳</span>
<span class="t" style="left:548px;top:335.3px;letter-spacing:.3px">04-10 16:42</span>
<svg style="left:631px;top:340.6px" width="8" height="5" viewBox="0 0 8 5"><path d="M0 .5h7L3.500 4.500z" fill="#111"/></svg>
<span class="t" style="left:875.500px;top:375.500px;height:30px;line-height:30px;font-size:21.100px;color:#fd2b1d">1.根据客户提供的信息，录入订单数据</span>
<div class="grp" style="left:485px;top:440px;width:1440px;height:100px;border-right:0;border-radius:4px 0 0 4px"></div>
<div class="cap" style="left:486px;top:441px;width:20px;height:98px;"></div>
<div class="vt" style="left:456.0px;top:494.0px;width:80px">报关信息</div>
<span class="t" style="left:508px;top:447px;">报关方式</span>
<div style="left:560px;top:443px;width:124px;height:20.5px;background:linear-gradient(#dbe3ef,#e3e9f3 45%,#d6dfee);border:1px solid #a3bde3;border-radius:3px"></div>
<div style="left:560px;top:443px;width:28px;height:20.5px;background:linear-gradient(#8f9fb1,#a9bbd0 50%,#c4d8f0);border:1px solid #8fabd6;border-radius:3px;box-shadow:inset 0 1px 0 #c9d6e6"></div>
<span class="t b" style="left:587px;top:444.5px;width:96px;text-align:center;color:#15428b;letter-spacing:1px">客户自报</span>
<span class="t" style="left:508px;top:472px;">舱单方式</span>
<div style="left:560px;top:468px;width:124px;height:20.5px;background:linear-gradient(#dbe3ef,#e3e9f3 45%,#d6dfee);border:1px solid #a3bde3;border-radius:3px"></div>
<div style="left:560px;top:468px;width:28px;height:20.5px;background:linear-gradient(#8f9fb1,#a9bbd0 50%,#c4d8f0);border:1px solid #8fabd6;border-radius:3px;box-shadow:inset 0 1px 0 #c9d6e6"></div>
<span class="t b" style="left:587px;top:469.5px;width:96px;text-align:center;color:#15428b;letter-spacing:1px">客户自办</span>
<span class="t" style="left:508px;top:496.5px;">无缝捆绑</span>
<div style="left:560px;top:492px;width:124px;height:20.5px;background:linear-gradient(#dbe3ef,#e3e9f3 45%,#d6dfee);border:1px solid #a3bde3;border-radius:3px"></div>
<div style="left:560px;top:492px;width:28px;height:20.5px;background:linear-gradient(#8f9fb1,#a9bbd0 50%,#c4d8f0);border:1px solid #8fabd6;border-radius:3px;box-shadow:inset 0 1px 0 #c9d6e6"></div>
<span class="t b" style="left:587px;top:493.5px;width:96px;text-align:center;color:#15428b;letter-spacing:1px">客户自办</span>
<span class="t" style="left:508px;top:520.7px;">清关方式</span>
<div style="left:560px;top:516px;width:124px;height:20.5px;background:linear-gradient(#dbe3ef,#e3e9f3 45%,#d6dfee);border:1px solid #a3bde3;border-radius:3px"></div>
<div style="left:560px;top:516px;width:28px;height:20.5px;background:linear-gradient(#8f9fb1,#a9bbd0 50%,#c4d8f0);border:1px solid #8fabd6;border-radius:3px;box-shadow:inset 0 1px 0 #c9d6e6"></div>
<span class="t b" style="left:587px;top:517.5px;width:96px;text-align:center;color:#15428b;letter-spacing:1px">客户自办</span>
<span class="t" style="left:688px;top:447px;">报关类型</span>
<span class="t" style="left:688px;top:472px;">舱单数量</span>
<span class="t" style="left:688px;top:496.5px;">无缝号码</span>
<span class="t" style="left:688px;top:520.7px;">清关地址</span>
<span class="t" style="left:868px;top:447px;color:#f00">出口口岸</span>
<span class="t" style="left:868px;top:472px;">进口口岸</span>
<span class="t" style="left:868px;top:496.5px;">清关公司</span>
<span class="t" style="left:1048px;top:447px;">报关员</span>
<span class="t" style="left:1048px;top:472px;">联系电话</span>
<span class="t" style="left:1048px;top:496.5px;">六联单号</span>
<span class="t" style="left:1048px;top:520.7px;">清关号码</span>
<div class="inp" style="left:740px;top:443px;width:124px;height:21px;"></div>
<div class="ddb" style="left:847px;top:445px;width:15px;height:17px;"></div>
<span class="t" style="left:745px;top:444.5px;"><i class="h">-</i>所有<i class="h">-</i></span>
<div class="inp" style="left:740px;top:468px;width:124px;height:21px;"></div>
<div style="left:847px;top:470px;width:15px;height:8px;border:1px solid #7393c6;background:linear-gradient(#dfeafc,#a9cbf9)"></div>
<svg style="left:852px;top:472px" width="5" height="4" viewBox="0 0 5 4"><path d="M0 3.500h5L2.500 .5z" fill="#0e2b66"/></svg>
<div style="left:847px;top:479px;width:15px;height:9px;border:1px solid #7393c6;background:linear-gradient(#dfeafc,#a9cbf9)"></div>
<svg style="left:852px;top:482px" width="5" height="4" viewBox="0 0 5 4"><path d="M0 .5h5L2.500 3.500z" fill="#0e2b66"/></svg>
<div class="inp" style="left:740px;top:493px;width:124px;height:21px;"></div>
<div class="inp" style="left:740px;top:517px;width:304px;height:21px;"></div>
<div class="inp" style="left:920px;top:443px;width:124px;height:21px;"></div>
<div class="ddb" style="left:1027px;top:445px;width:15px;height:17px;"></div>
<span class="t" style="left:925px;top:444.5px;"><i class="h">-</i>请选择<i class="h">-</i></span>
<div class="inp" style="left:920px;top:468px;width:124px;height:21px;"></div>
<div class="ddb" style="left:1027px;top:470px;width:15px;height:17px;"></div>
<span class="t" style="left:925px;top:469.5px;"><i class="h">-</i>请选择<i class="h">-</i></span>
<div class="inp" style="left:920px;top:493px;width:124px;height:21px;"></div>
<div class="inp" style="left:1100px;top:443px;width:124px;height:21px;"></div>
<div class="inp" style="left:1100px;top:468px;width:124px;height:21px;"></div>
<div class="inp" style="left:1100px;top:493px;width:124px;height:21px;"></div>
<div class="inp" style="left:1100px;top:517px;width:124px;height:21px;"></div>
<span class="t" style="left:1228px;top:484px;">报关备注</span>
<div class="inp" style="left:1280px;top:443px;width:640px;height:94px;"></div>
<div style="left:1897px;top:444px;width:15px;height:92px;background:#f0f0f0"></div>
<svg style="left:1901px;top:451px" width="8" height="5" viewBox="0 0 8 5"><path d="M.5 4.500l3.500-3.500 3.500 3.500" fill="none" stroke="#b9b9b9" stroke-width="1.700"/></svg>
<svg style="left:1901px;top:525px" width="8" height="5" viewBox="0 0 8 5"><path d="M.5 .5l3.500 3.500 3.500-3.500" fill="none" stroke="#b9b9b9" stroke-width="1.700"/></svg>
<div class="grp" style="left:483px;top:546px;width:1440px;height:75px;border-right:0;border-radius:4px 0 0 4px"></div>
<div class="cap" style="left:484px;top:547px;width:20px;height:73px;"></div>
<div class="vt" style="left:454.0px;top:587.5px;width:80px">操作</div>
<span class="t" style="left:506px;top:553px;">计泡方式</span>
<span class="t" style="left:506px;top:578px;">声明价值</span>
<span class="t" style="left:506px;top:602px;">保价费率</span>
<span class="t" style="left:709px;top:553px;">计泡重量</span>
<span class="t" style="left:709px;top:578px;">跟单员</span>
<span class="t" style="left:709px;top:602px;">开单网点</span>
<span class="t" style="left:865px;top:553px;">计费重</span>
<span class="t" style="left:865px;top:578px;">审核信息</span>
<span class="t" style="left:865px;top:602px;">制单信息</span>
<div class="inp" style="left:558px;top:549px;width:147px;height:21px;"></div>
<div class="ddb" style="left:688px;top:551px;width:15px;height:17px;"></div>
<span class="t" style="left:563px;top:550.5px;">全泡</span>
<div class="inp" style="left:558px;top:574px;width:76.5px;height:21px;"></div>
<div class="inp" style="left:635.5px;top:574px;width:69.5px;height:21px;"></div>
<div class="ddb" style="left:688.0px;top:576px;width:15px;height:17px;"></div>
<span class="t" style="left:640.5px;top:575.5px;">人民币</span>
<div style="left:558px;top:594px;width:147px;height:1px;background:#eceff4"></div>
<div class="inp" style="left:558px;top:598px;width:121.5px;height:21px;"></div>
<div style="left:662.5px;top:600px;width:15px;height:8px;border:1px solid #7393c6;background:linear-gradient(#dfeafc,#a9cbf9)"></div>
<svg style="left:667.5px;top:602px" width="5" height="4" viewBox="0 0 5 4"><path d="M0 3.500h5L2.500 .5z" fill="#0e2b66"/></svg>
<div style="left:662.5px;top:609px;width:15px;height:9px;border:1px solid #7393c6;background:linear-gradient(#dfeafc,#a9cbf9)"></div>
<svg style="left:667.5px;top:612px" width="5" height="4" viewBox="0 0 5 4"><path d="M0 .5h5L2.500 3.500z" fill="#0e2b66"/></svg>
<div style="left:684px;top:598px;width:21px;height:20px;background:#ffffe1"></div>
<span class="t" style="left:688px;top:601px;">‰</span>
<div class="inp" style="left:761px;top:549px;width:100px;height:21px;"></div>
<div style="left:844px;top:551px;width:15px;height:8px;border:1px solid #7393c6;background:linear-gradient(#dfeafc,#a9cbf9)"></div>
<svg style="left:849px;top:553px" width="5" height="4" viewBox="0 0 5 4"><path d="M0 3.500h5L2.500 .5z" fill="#0e2b66"/></svg>
<div style="left:844px;top:560px;width:15px;height:9px;border:1px solid #7393c6;background:linear-gradient(#dfeafc,#a9cbf9)"></div>
<svg style="left:849px;top:563px" width="5" height="4" viewBox="0 0 5 4"><path d="M0 .5h5L2.500 3.500z" fill="#0e2b66"/></svg>
<span class="t" style="left:761px;top:551.5px;width:79px;text-align:right;letter-spacing:.6px">0.00</span>
<div class="disd" style="left:761px;top:574px;width:99px;height:20px;"></div>
<div style="left:761px;top:598px;width:99px;height:20px;background:#ffffe1"></div>
<span class="t" style="left:762.5px;top:600px;color:#ff4500;font-weight:bold;letter-spacing:1px">深圳总部</span>
<div class="inp" style="left:917px;top:549px;width:129px;height:21px;"></div>
<div style="left:1029px;top:551px;width:15px;height:8px;border:1px solid #7393c6;background:linear-gradient(#dfeafc,#a9cbf9)"></div>
<svg style="left:1034px;top:553px" width="5" height="4" viewBox="0 0 5 4"><path d="M0 3.500h5L2.500 .5z" fill="#0e2b66"/></svg>
<div style="left:1029px;top:560px;width:15px;height:9px;border:1px solid #7393c6;background:linear-gradient(#dfeafc,#a9cbf9)"></div>
<svg style="left:1034px;top:563px" width="5" height="4" viewBox="0 0 5 4"><path d="M0 .5h5L2.500 3.500z" fill="#0e2b66"/></svg>
<span class="t" style="left:917px;top:551.5px;width:108px;text-align:right;letter-spacing:.6px">0.00</span>
<div class="disd" style="left:917px;top:574px;width:129px;height:20px;"></div>
<div class="disd" style="left:917px;top:598px;width:129px;height:20px;"></div>
<span class="t" style="left:1049px;top:576.5px;">财务备注</span>
<div class="inp" style="left:1102px;top:549px;width:820px;height:69px;"></div>
<div style="left:1897px;top:550px;width:15px;height:67px;background:#f0f0f0"></div>
<svg style="left:1901px;top:557px" width="8" height="5" viewBox="0 0 8 5"><path d="M.5 4.500l3.500-3.500 3.500 3.500" fill="none" stroke="#b9b9b9" stroke-width="1.700"/></svg>
<svg style="left:1901px;top:606px" width="8" height="5" viewBox="0 0 8 5"><path d="M.5 .5l3.500 3.500 3.500-3.500" fill="none" stroke="#b9b9b9" stroke-width="1.700"/></svg>
<div style="left:483px;top:626px;width:1440px;height:25px;background:#bfdbff"></div>
<div style="left:483px;top:651px;width:1440px;height:1px;background:#8fb1e6"></div>
<div style="left:483px;top:652px;width:1440px;height:1px;background:#d9fbff"></div>
<div style="left:483px;top:625px;width:72px;height:28px;background:linear-gradient(#edf3fc,#dde7f7);border:1px solid #8fb5ea;border-bottom:0;border-radius:4px 4px 0 0;box-shadow:inset 1px 1px 0 #d8f6ff,inset -1px 0 0 #d8f6ff"></div>
<span class="t" style="left:490px;top:630px;color:#15428b;font-weight:bold;letter-spacing:1px">卸货信息</span>
<span class="t" style="left:562px;top:630px;color:#15428b">客户报价</span>
<span class="t" style="left:634px;top:630px;color:#15428b">业务底价</span>
<span class="t" style="left:706px;top:630px;color:#15428b">公司成本</span>
<span class="t" style="left:778px;top:630px;color:#15428b">上门提货</span>
<span class="t" style="left:850px;top:630px;color:#15428b">分单配载</span>
<span class="t" style="left:922px;top:630px;color:#15428b">派送签收</span>
<span class="t" style="left:994px;top:630px;color:#15428b">调度信息</span>
<span class="t" style="left:1066px;top:630px;color:#15428b">文件信息</span>
<span class="t" style="left:1138px;top:630px;color:#15428b">更改记录</span>
<svg style="left:1903px;top:636px" width="9" height="5" viewBox="0 0 9 5"><path d="M0 0h9L4.500 5z" fill="#000"/></svg>
<div style="left:483px;top:653px;width:1440px;height:353px;background:#fff;border:1px solid #9b9fad;border-right:0"></div>
<div class="hd" style="left:484px;top:654px;width:35px;height:21px;"></div>
<div class="hd" style="left:484px;top:675px;width:35px;height:21px;"></div>
<div class="hd" style="left:484px;top:696px;width:35px;height:21px;"></div>
<div class="hd" style="left:519px;top:654px;width:150px;height:21px;">品名</div>
<div class="c" style="left:519px;top:675px;width:150px;height:21px;"></div>
<div class="c" style="left:519px;top:696px;width:150px;height:21px;"></div>
<div class="hd" style="left:669px;top:654px;width:80px;height:21px;">唛头</div>
<div class="cs" style="left:669px;top:675px;width:80px;height:21px;"></div>
<div class="c" style="left:669px;top:696px;width:80px;height:21px;"></div>
<div class="hd" style="left:749px;top:654px;width:80px;height:21px;">入仓号</div>
<div class="cs" style="left:749px;top:675px;width:80px;height:21px;"></div>
<div class="c" style="left:749px;top:696px;width:80px;height:21px;"></div>
<div class="hd" style="left:829px;top:654px;width:80px;height:21px;">包装</div>
<div class="cs" style="left:829px;top:675px;width:80px;height:21px;"></div>
<div class="c" style="left:829px;top:696px;width:80px;height:21px;"></div>
<div class="hd" style="left:909px;top:654px;width:70px;height:21px;">货物类别</div>
<div class="cs" style="left:909px;top:675px;width:70px;height:21px;"></div>
<div class="c" style="left:909px;top:696px;width:70px;height:21px;"></div>
<div class="hd" style="left:979px;top:654px;width:80px;height:21px;">板数</div>
<div class="cs" style="left:979px;top:675px;width:80px;height:21px;"></div>
<div class="c" style="left:979px;top:696px;width:80px;height:21px;"></div>
<div class="hd" style="left:1059px;top:654px;width:60px;height:21px;">件数</div>
<div class="cs" style="left:1059px;top:675px;width:60px;height:21px;"></div>
<div class="c" style="left:1059px;top:696px;width:60px;height:21px;"></div>
<div class="hd" style="left:1119px;top:654px;width:50px;height:21px;">单位</div>
<div class="cs" style="left:1119px;top:675px;width:50px;height:21px;"></div>
<div class="c" style="left:1119px;top:696px;width:50px;height:21px;"></div>
<div class="hd" style="left:1169px;top:654px;width:60px;height:21px;">重量(KG)</div>
<div class="cs" style="left:1169px;top:675px;width:60px;height:21px;"></div>
<div class="c" style="left:1169px;top:696px;width:60px;height:21px;"></div>
<div class="hd" style="left:1229px;top:654px;width:60px;height:21px;">体积<i class="l">(m³)</i></div>
<div class="cs" style="left:1229px;top:675px;width:60px;height:21px;"></div>
<div class="c" style="left:1229px;top:696px;width:60px;height:21px;"></div>
<div class="hd" style="left:1289px;top:654px;width:55px;height:21px;">长<i class="l">(cm)</i></div>
<div class="cs" style="left:1289px;top:675px;width:55px;height:21px;"></div>
<div class="c" style="left:1289px;top:696px;width:55px;height:21px;"></div>
<div class="hd" style="left:1344px;top:654px;width:55px;height:21px;">宽<i class="l">(cm)</i></div>
<div class="cs" style="left:1344px;top:675px;width:55px;height:21px;"></div>
<div class="c" style="left:1344px;top:696px;width:55px;height:21px;"></div>
<div class="hd" style="left:1399px;top:654px;width:55px;height:21px;">高<i class="l">(cm)</i></div>
<div class="cs" style="left:1399px;top:675px;width:55px;height:21px;"></div>
<div class="c" style="left:1399px;top:696px;width:55px;height:21px;"></div>
<div class="hd" style="left:1454px;top:654px;width:80px;height:21px;">收货联系人</div>
<div class="cs" style="left:1454px;top:675px;width:80px;height:21px;"></div>
<div class="c" style="left:1454px;top:696px;width:80px;height:21px;"></div>
<div class="hd" style="left:1534px;top:654px;width:80px;height:21px;">收货电话</div>
<div class="cs" style="left:1534px;top:675px;width:80px;height:21px;"></div>
<div class="c" style="left:1534px;top:696px;width:80px;height:21px;"></div>
<div class="hd" style="left:1614px;top:654px;width:80px;height:21px;">收货公司</div>
<div class="cs" style="left:1614px;top:675px;width:80px;height:21px;"></div>
<div class="c" style="left:1614px;top:696px;width:80px;height:21px;"></div>
<div class="hd" style="left:1694px;top:654px;width:150px;height:21px;">收货地址</div>
<div class="cs" style="left:1694px;top:675px;width:150px;height:21px;"></div>
<div class="c" style="left:1694px;top:696px;width:150px;height:21px;"></div>
<div class="hd" style="left:1844px;top:654px;width:80px;height:21px;">备注</div>
<div class="cs" style="left:1844px;top:675px;width:80px;height:21px;"></div>
<div class="c" style="left:1844px;top:696px;width:80px;height:21px;"></div>
<svg style="left:490px;top:681.5px" width="5" height="8" viewBox="0 0 5 8"><path d="M.5 0v8l4-4z" fill="#111"/></svg>
<span class="t" style="left:498.5px;top:677.3px;">1</span>
<span class="t" style="left:487px;top:700.0px;font-size:11px;font-family:'DejaVu Sans',sans-serif">✳</span>
<svg style="left:656px;top:682.6px" width="8" height="5" viewBox="0 0 8 5"><path d="M0 .5h7L3.500 4.500z" fill="#111"/></svg>
<div style="left:484px;top:957px;width:1430px;height:31px;background:#e5e6ea;border-top:1px solid #c2c5cf"></div>
<div style="left:520px;top:960px;width:148px;height:26px;background:#fff;border:1px solid #cfd1d8"></div>
<span class="t" style="left:610px;top:966.5px;letter-spacing:.4px">合计“1”条</span>
<div style="left:980px;top:960px;width:78px;height:26px;background:#fff;border:1px solid #cfd1d8"></div>
<span class="t" style="left:980px;top:965.500px;width:73px;text-align:right">0</span>
<div style="left:1060px;top:960px;width:58px;height:26px;background:#fff;border:1px solid #cfd1d8"></div>
<span class="t" style="left:1060px;top:965.500px;width:53px;text-align:right">0</span>
<div style="left:1170px;top:960px;width:58px;height:26px;background:#fff;border:1px solid #cfd1d8"></div>
<span class="t" style="left:1170px;top:965.500px;width:53px;text-align:right">0</span>
<div style="left:1230px;top:960px;width:58px;height:26px;background:#fff;border:1px solid #cfd1d8"></div>
<span class="t" style="left:1230px;top:965.500px;width:53px;text-align:right">0</span>
<div style="left:484px;top:988px;width:1430px;height:17px;background:#f5f5f7"></div>
<div style="left:501px;top:993px;width:1179px;height:7px;background:linear-gradient(#f0f1f4,#d9dbe1);border:1px solid #a9adba;border-radius:4px"></div>
<svg style="left:490px;top:992px" width="5" height="9" viewBox="0 0 5 9"><path d="M4.500 0v9L0 4.500z" fill="#7a7f90"/></svg>
<svg style="left:1905px;top:992px" width="5" height="9" viewBox="0 0 5 9"><path d="M0 0v9L4.500 4.500z" fill="#7a7f90"/></svg>
<div style="left:1909.5px;top:851px;width:4px;height:59px;background:#3a3f4d;border-radius:2px 0 0 2px"></div>
</body></html>
